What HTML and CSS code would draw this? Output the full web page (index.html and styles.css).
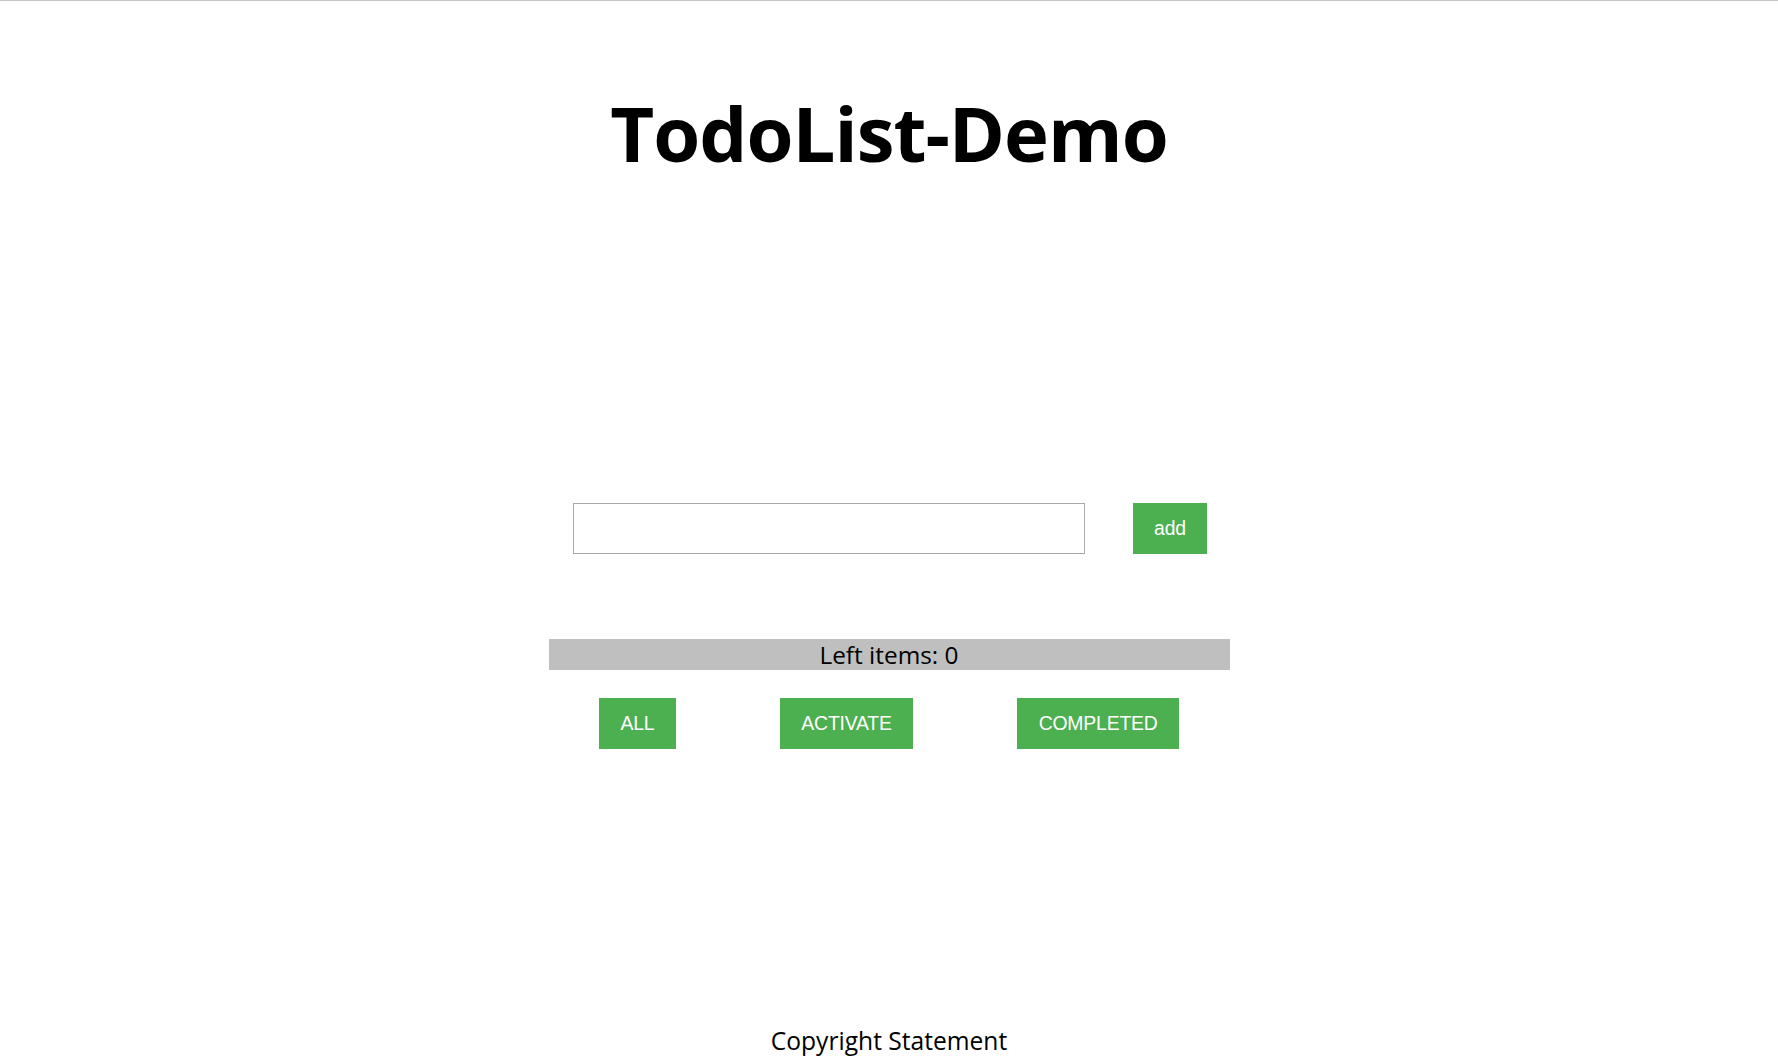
FILE: index.html
```html
<!DOCTYPE html>
<html lang="en">
<head>
<meta charset="utf-8">
<title>TodoList-Demo</title>
<link rel="stylesheet" href="styles.css">
</head>
<body>
<div class="page">
  <header class="header">
    <h1 class="title">TodoList-Demo</h1>
  </header>
  <main class="main">
    <div class="add-row">
      <input class="todo-input" type="text">
      <button class="btn btn-add">add</button>
    </div>
    <div class="left-bar">Left items: 0</div>
    <div class="filters">
      <button class="btn">ALL</button>
      <button class="btn">ACTIVATE</button>
      <button class="btn">COMPLETED</button>
    </div>
  </main>
  <footer class="footer">Copyright Statement</footer>
</div>
</body>
</html>
```
FILE: styles.css
```css
html, body {
  margin: 0;
  padding: 0;
  background: #fff;
}
.page {
  border-top: 1px solid #c6c6c6;
  height: 1063px;
  display: flex;
  flex-direction: column;
  align-items: center;
  font-family: "Open Sans", "Noto Sans", sans-serif;
  color: #000;
}
.header {
  padding-top: 86px;
}
.title {
  margin: 0;
  font-size: 76px;
  font-weight: 700;
  line-height: 1.2;
  letter-spacing: -1px;
}
.main {
  display: flex;
  flex-direction: column;
  align-items: center;
  padding-top: 325px;
}
.add-row {
  display: flex;
  gap: 48px;
  margin-left: 2px;
}
.todo-input {
  box-sizing: border-box;
  width: 512px;
  height: 51px;
  border: 1px solid #a9a9a9;
  margin: 0;
  padding: 0 6px;
  font-size: 18px;
  outline: none;
}
.btn {
  box-sizing: border-box;
  height: 51px;
  padding: 0 21.5px;
  border: none;
  background: #4caf50;
  color: #fff;
  font-family: "Liberation Sans", Arial, sans-serif;
  font-size: 19.4px;
  letter-spacing: -0.2px;
  margin: 0;
  cursor: pointer;
}
.btn-add {
  width: 74px;
  padding: 0;
}
.left-bar {
  margin-top: 85px;
  width: 681px;
  height: 31px;
  background: #bfbfbf;
  text-align: center;
  font-size: 24.4px;
  line-height: 31px;
}
.filters {
  margin-top: 28px;
  display: flex;
  gap: 104px;
}
.footer {
  margin-top: auto;
  padding-bottom: 7px;
  font-size: 24.6px;
}
```
